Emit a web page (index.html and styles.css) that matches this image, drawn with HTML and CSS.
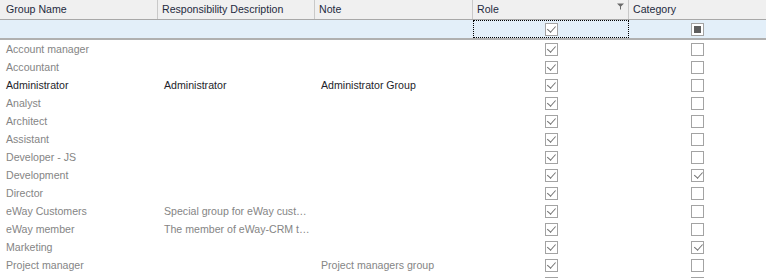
FILE: index.html
```html
<!DOCTYPE html>
<html>
<head>
<meta charset="utf-8">
<link rel="stylesheet" href="styles.css">
</head>
<body>
<div class="grid">
  <div class="row header">
    <div class="cell hc">Group Name</div>
    <div class="cell hc">Responsibility Description</div>
    <div class="cell hc">Note</div>
    <div class="cell hc role-h">Role
      <svg class="funnel" width="7" height="7" viewBox="0 0 7 7"><path d="M0 0.5H7L4 3.5V6.5H3V3.5Z" fill="#6a6a6a"/></svg>
    </div>
    <div class="cell hc last">Category</div>
  </div>
  <div class="row filter">
    <div class="cell"></div>
    <div class="cell"></div>
    <div class="cell"></div>
    <div class="cell cb focus"><span class="box on"></span></div>
    <div class="cell cb"><span class="box ind"><span class="sq"></span></span></div>
  </div>
  <div class="body">
    <div class="row"><div class="cell">Account manager</div><div class="cell"></div><div class="cell"></div><div class="cell cb"><span class="box on"></span></div><div class="cell cb"><span class="box"></span></div></div>
    <div class="row"><div class="cell">Accountant</div><div class="cell"></div><div class="cell"></div><div class="cell cb"><span class="box on"></span></div><div class="cell cb"><span class="box"></span></div></div>
    <div class="row dark"><div class="cell">Administrator</div><div class="cell">Administrator</div><div class="cell">Administrator Group</div><div class="cell cb"><span class="box on"></span></div><div class="cell cb"><span class="box"></span></div></div>
    <div class="row"><div class="cell">Analyst</div><div class="cell"></div><div class="cell"></div><div class="cell cb"><span class="box on"></span></div><div class="cell cb"><span class="box"></span></div></div>
    <div class="row"><div class="cell">Architect</div><div class="cell"></div><div class="cell"></div><div class="cell cb"><span class="box on"></span></div><div class="cell cb"><span class="box"></span></div></div>
    <div class="row"><div class="cell">Assistant</div><div class="cell"></div><div class="cell"></div><div class="cell cb"><span class="box on"></span></div><div class="cell cb"><span class="box"></span></div></div>
    <div class="row"><div class="cell">Developer - JS</div><div class="cell"></div><div class="cell"></div><div class="cell cb"><span class="box on"></span></div><div class="cell cb"><span class="box"></span></div></div>
    <div class="row"><div class="cell">Development</div><div class="cell"></div><div class="cell"></div><div class="cell cb"><span class="box on"></span></div><div class="cell cb"><span class="box on"></span></div></div>
    <div class="row"><div class="cell">Director</div><div class="cell"></div><div class="cell"></div><div class="cell cb"><span class="box on"></span></div><div class="cell cb"><span class="box"></span></div></div>
    <div class="row"><div class="cell">eWay Customers</div><div class="cell">Special group for eWay cust…</div><div class="cell"></div><div class="cell cb"><span class="box on"></span></div><div class="cell cb"><span class="box"></span></div></div>
    <div class="row"><div class="cell">eWay member</div><div class="cell">The member of eWay-CRM t…</div><div class="cell"></div><div class="cell cb"><span class="box on"></span></div><div class="cell cb"><span class="box"></span></div></div>
    <div class="row"><div class="cell">Marketing</div><div class="cell"></div><div class="cell"></div><div class="cell cb"><span class="box on"></span></div><div class="cell cb"><span class="box on"></span></div></div>
    <div class="row"><div class="cell">Project manager</div><div class="cell"></div><div class="cell">Project managers group</div><div class="cell cb"><span class="box on"></span></div><div class="cell cb"><span class="box"></span></div></div>
    <div class="row"><div class="cell"></div><div class="cell"></div><div class="cell"></div><div class="cell cb"><span class="box on"></span></div><div class="cell cb"><span class="box"></span></div></div>
  </div>
</div>
</body>
</html>
```

FILE: styles.css
```css
html, body {
  margin: 0;
  padding: 0;
  background: #ffffff;
  overflow: hidden;
}
.grid {
  width: 766px;
  font-family: "Liberation Sans", Arial, sans-serif;
  font-size: 10.6px;
  color: #858585;
}
.row {
  display: grid;
  grid-template-columns: 158px 157px 158px 156px 137px;
  height: 18px;
  align-items: center;
}
.cell {
  padding-left: 6px;
  white-space: nowrap;
  overflow: hidden;
  height: 100%;
  display: flex;
  align-items: center;
  box-sizing: border-box;
  padding-bottom: 1px;
}
.header {
  height: 20px;
  box-sizing: border-box;
  background: #f0f0f0;
  border-bottom: 1px solid #a8a8a8;
  color: #1e2a3e;
}
.hc {
  border-right: 1px solid #c9c9c9;
  padding-left: 4px;
  padding-bottom: 2px;
}
.hc:first-child { padding-left: 6px; }
.hc.last { border-right: none; }
.role-h { position: relative; }
.funnel {
  position: absolute;
  right: 4px;
  top: 3px;
}
.filter {
  height: 20px;
  box-sizing: border-box;
  background: #e3eff9;
  border-bottom: 2px solid #b0b0b0;
}
.dark { color: #1e1e2a; }
.cb {
  justify-content: center;
  padding-left: 0;
  padding-bottom: 0;
}
.focus {
  outline: 1px dotted #000;
  outline-offset: -1px;
}
.box {
  width: 11px;
  height: 11px;
  border: 1px solid #a3a3a3;
  background: #fff;
  display: flex;
  align-items: center;
  justify-content: center;
  position: relative;
}
.box.on::after {
  content: "";
  position: absolute;
  left: 3.5px;
  top: 0.5px;
  width: 3.5px;
  height: 7px;
  border-right: 1.4px solid #707070;
  border-bottom: 1.4px solid #707070;
  transform: rotate(42deg);
}
.sq {
  width: 7px;
  height: 7px;
  background: #5e5e5e;
}
```
